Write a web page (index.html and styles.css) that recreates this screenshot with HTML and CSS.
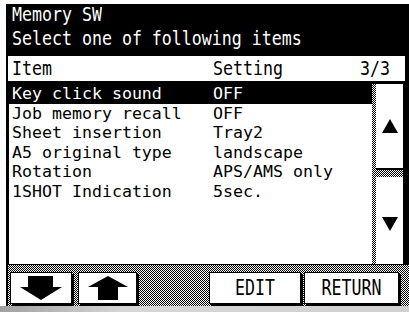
FILE: index.html
```html
<!DOCTYPE html>
<html>
<head>
<meta charset="utf-8">
<link rel="stylesheet" href="styles.css">
</head>
<body>
<div class="screen">
  <div class="title">
    <div class="title-line l1"><span class="t">Memory SW</span></div>
    <div class="title-line l2"><span class="t">Select one of following items</span></div>
  </div>
  <div class="header">
    <span class="col1"><span class="t">Item</span></span>
    <span class="col2"><span class="t">Setting</span></span>
    <span class="page"><span class="t">3/3</span></span>
  </div>
  <div class="body">
    <div class="list">
      <div class="row sel"><span class="col1"><span class="t">Key click sound</span></span><span class="col2"><span class="t">OFF</span></span></div>
      <div class="row"><span class="col1"><span class="t">Job memory recall</span></span><span class="col2"><span class="t">OFF</span></span></div>
      <div class="row"><span class="col1"><span class="t">Sheet insertion</span></span><span class="col2"><span class="t">Tray2</span></span></div>
      <div class="row"><span class="col1"><span class="t">A5 original type</span></span><span class="col2"><span class="t">landscape</span></span></div>
      <div class="row"><span class="col1"><span class="t">Rotation</span></span><span class="col2"><span class="t">APS/AMS only</span></span></div>
      <div class="row"><span class="col1"><span class="t">1SHOT Indication</span></span><span class="col2"><span class="t">5sec.</span></span></div>
    </div>
    <div class="scroll">
      <div class="sdither"></div>
      <div class="scol">
        <div class="sbtn sup">
          <svg width="16" height="14" viewBox="0 0 16 14"><polygon points="8,0 16,14 0,14" fill="#000"/></svg>
        </div>
        <div class="sep"></div>
        <div class="sbtn sdown">
          <svg width="16" height="14" viewBox="0 0 16 14"><polygon points="0,0 16,0 8,14" fill="#000"/></svg>
        </div>
      </div>
    </div>
  </div>
  <div class="footer">
    <div class="btn b-down">
      <svg width="42" height="24" viewBox="0 0 42 24"><polygon points="8,0 33,0 33,11 42,11 21,24 0,11 8,11" fill="#000"/></svg>
    </div>
    <div class="btn b-up">
      <svg width="40" height="24" viewBox="0 0 40 24"><polygon points="20,0 40,11 30,11 30,24 10,24 10,11 0,11" fill="#000"/></svg>
    </div>
    <div class="spacer"></div>
    <div class="btn b-edit"><span class="t big">EDIT</span></div>
    <div class="btn b-ret"><span class="t big">RETURN</span></div>
  </div>
</div>
<div class="bottom"></div>
</body>
</html>
```

FILE: styles.css
```css
* { box-sizing: border-box; }
html, body { margin: 0; padding: 0; }
body {
  background: #fff;
  width: 409px;
  height: 312px;
  overflow: hidden;
  font-family: "DejaVu Sans Mono", "Liberation Mono", monospace;
  font-size: 16.6px;
}
.screen {
  margin: 4px 0 0 6px;
  width: 403px;
  height: 302px;
  background: #000;
  display: flex;
  flex-direction: column;
}
.t {
  display: inline-block;
  line-height: 16px;
  transform: scaleY(1.15);
  white-space: pre;
}
.row .t {
  transform: none;
}
.title {
  padding-left: 6px;
  color: #fff;
}
.title-line.l1 { height: 22px; line-height: 22px; }
.title-line.l2 { height: 26px; line-height: 26px; }
.header {
  margin: 4px 4px 0 2px;
  height: 25px;
  line-height: 25px;
  background: #fff;
  color: #000;
  display: flex;
  padding: 0 15px 0 4px;
}
.col1 { width: 201px; flex: none; }
.col2 { flex: 1; }
.page { flex: none; }
.body {
  margin-top: 3px;
  height: 180px;
  display: flex;
  padding-left: 3px;
}
.list {
  width: 363px;
  background: #fff;
}
.row {
  height: 19.5px;
  line-height: 19.5px;
  display: flex;
  padding-left: 3px;
  color: #000;
}
.row.sel {
  background: #000;
  color: #fff;
  margin-left: -1px;
  padding-left: 4px;
}
.scroll {
  width: 37px;
  display: flex;
  background: #000;
}
.sdither {
  width: 4px;
  background: repeating-conic-gradient(#000 0 25%, #fff 0 50%) 0 0 / 2px 2px;
}
.scol {
  width: 27px;
  display: flex;
  flex-direction: column;
}
.sbtn {
  background: #fff;
  display: flex;
  align-items: center;
  justify-content: center;
}
.sup { height: 84px; }
.sdown { flex: 1; padding-top: 6px; }
.sep {
  height: 9px;
  border-top: 2px solid #000;
  background: repeating-conic-gradient(#000 0 25%, #fff 0 50%) 0 0 / 2px 2px;
}
.footer {
  height: 42px;
  border-top: 1px solid #000;
  border-left: 2px solid #000;
  background: repeating-conic-gradient(#000 0 25%, #fff 0 50%) 0 0 / 2px 2px;
  display: flex;
  align-items: flex-start;
  padding: 7px 10px 0 2px;
}
.btn {
  height: 32px;
  background: #fff;
  border: 1px solid #000;
  box-shadow: 2px 2px 0 #000;
  display: flex;
  align-items: center;
  justify-content: center;
  color: #000;
  flex: none;
}
.t.big { transform: scaleY(1.3); }
.b-down { width: 62px; }
.b-up { width: 59px; margin-left: 6px; }
.spacer { flex: 1; }
.b-edit { width: 92px; }
.b-ret { width: 95px; margin-left: 3px; }
.bottom {
  height: 6px;
  background: linear-gradient(to right, #a0a0a0, #d6d6d6 30%, #d0d0d0);
}
```
